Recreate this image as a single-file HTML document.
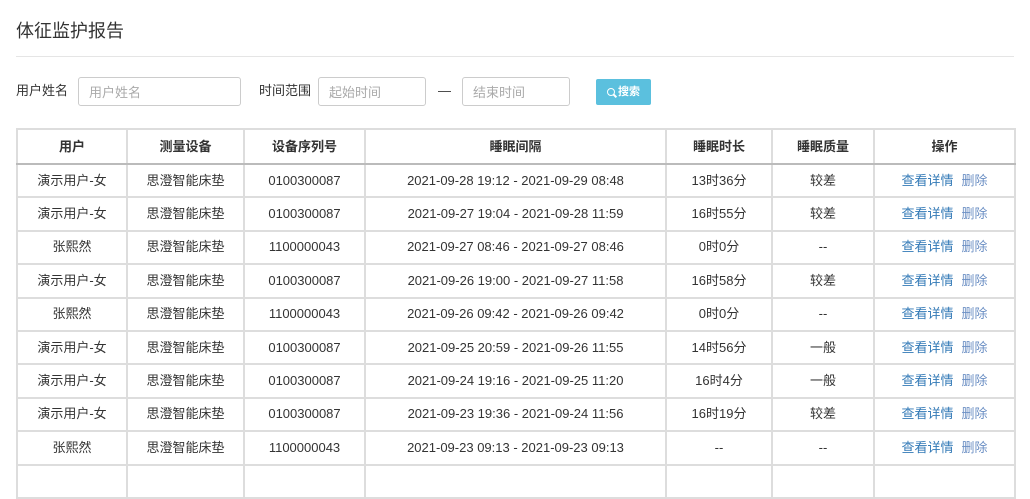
<!DOCTYPE html>
<html><head><meta charset="utf-8"><style>
body{margin:0;background:#fff;font-family:"Liberation Sans","Noto Sans CJK SC",sans-serif;font-size:13px;color:#333;width:1030px;height:470px;overflow:hidden;position:relative}
.title{position:absolute;left:16px;top:17px;font-size:18px;color:#333}
.hr{position:absolute;left:16px;right:16px;top:56px;border-top:1px solid #e5e5e5}
.lbl{position:absolute;top:82px;font-size:13px;color:#333;line-height:18px}
.inp{position:absolute;top:77px;height:29px;border:1px solid #ccc;border-radius:3px;box-sizing:border-box;color:#aaa;font-size:13px;line-height:27px;padding-left:10px;padding-top:1px}
.btn{position:absolute;left:596px;top:79px;width:55px;height:26px;background:#5bc0de;border-radius:2px;color:#fff;font-size:11px;font-weight:bold;line-height:26px;text-align:center}
.mg{display:inline-block;width:6px;height:6px;border:1.6px solid #fff;border-radius:50%;position:relative;vertical-align:-1px;margin-right:3px}
.mg:after{content:"";position:absolute;width:1.8px;height:4px;background:#fff;left:6px;top:5px;transform:rotate(-45deg)}
table{position:absolute;left:16px;top:128px;border-collapse:collapse;border:2px solid #ddd;table-layout:fixed;width:998px}
td,th{border:2px solid #ddd;text-align:center;padding:0;font-size:13px;color:#333;line-height:18px;vertical-align:middle}
th{font-weight:bold;height:33px;border-bottom:2px solid #bbb}
tr.r{height:33.4px}
a{color:#337ab7;text-decoration:none}
a.d{color:#6b8fc4;margin-left:8px}
</style></head><body>
<div class="title">体征监护报告</div>
<div class="hr"></div>
<div class="lbl" style="left:16px">用户姓名</div>
<div class="inp" style="left:78px;width:163px">用户姓名</div>
<div class="lbl" style="left:259px">时间范围</div>
<div class="inp" style="left:318px;width:108px">起始时间</div>
<div class="lbl" style="left:438px">—</div>
<div class="inp" style="left:462px;width:108px">结束时间</div>
<div class="btn"><span class="mg"></span>搜索</div>
<table>
<colgroup><col style="width:110px"><col style="width:117px"><col style="width:121px"><col style="width:301px"><col style="width:106px"><col style="width:102px"><col style="width:141px"></colgroup>
<tr><th>用户</th><th>测量设备</th><th>设备序列号</th><th>睡眠间隔</th><th>睡眠时长</th><th>睡眠质量</th><th>操作</th></tr>
<tr class="r"><td>演示用户-女</td><td>思澄智能床垫</td><td>0100300087</td><td>2021-09-28 19:12 - 2021-09-29 08:48</td><td>13时36分</td><td>较差</td><td><a>查看详情</a><a class="d">删除</a></td></tr>
<tr class="r"><td>演示用户-女</td><td>思澄智能床垫</td><td>0100300087</td><td>2021-09-27 19:04 - 2021-09-28 11:59</td><td>16时55分</td><td>较差</td><td><a>查看详情</a><a class="d">删除</a></td></tr>
<tr class="r"><td>张熙然</td><td>思澄智能床垫</td><td>1100000043</td><td>2021-09-27 08:46 - 2021-09-27 08:46</td><td>0时0分</td><td>--</td><td><a>查看详情</a><a class="d">删除</a></td></tr>
<tr class="r"><td>演示用户-女</td><td>思澄智能床垫</td><td>0100300087</td><td>2021-09-26 19:00 - 2021-09-27 11:58</td><td>16时58分</td><td>较差</td><td><a>查看详情</a><a class="d">删除</a></td></tr>
<tr class="r"><td>张熙然</td><td>思澄智能床垫</td><td>1100000043</td><td>2021-09-26 09:42 - 2021-09-26 09:42</td><td>0时0分</td><td>--</td><td><a>查看详情</a><a class="d">删除</a></td></tr>
<tr class="r"><td>演示用户-女</td><td>思澄智能床垫</td><td>0100300087</td><td>2021-09-25 20:59 - 2021-09-26 11:55</td><td>14时56分</td><td>一般</td><td><a>查看详情</a><a class="d">删除</a></td></tr>
<tr class="r"><td>演示用户-女</td><td>思澄智能床垫</td><td>0100300087</td><td>2021-09-24 19:16 - 2021-09-25 11:20</td><td>16时4分</td><td>一般</td><td><a>查看详情</a><a class="d">删除</a></td></tr>
<tr class="r"><td>演示用户-女</td><td>思澄智能床垫</td><td>0100300087</td><td>2021-09-23 19:36 - 2021-09-24 11:56</td><td>16时19分</td><td>较差</td><td><a>查看详情</a><a class="d">删除</a></td></tr>
<tr class="r"><td>张熙然</td><td>思澄智能床垫</td><td>1100000043</td><td>2021-09-23 09:13 - 2021-09-23 09:13</td><td>--</td><td>--</td><td><a>查看详情</a><a class="d">删除</a></td></tr>
<tr class="r"><td>&nbsp;</td><td></td><td></td><td></td><td></td><td></td><td></td></tr>
</table>
</body></html>
